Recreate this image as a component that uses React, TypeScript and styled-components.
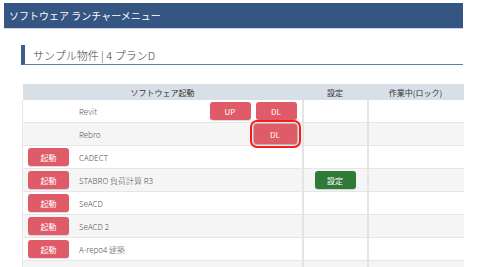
import styled, { createGlobalStyle } from "styled-components";

const GlobalStyle = createGlobalStyle`
  body {
    margin: 0;
    background: #ffffff;
    font-family: "Noto Sans CJK JP", "Noto Sans", sans-serif;
  }
`;

const Page = styled.div`
  width: 486px;
  padding-top: 3px;
`;

const TopBar = styled.div`
  margin: 0 23px 0 4px;
  height: 25px;
  background: #355582;
  border-bottom: 1px solid #c9d6e8;
  color: #ffffff;
  font-size: 10px;
  display: flex;
  align-items: center;
  padding-left: 5px;
`;

const Content = styled.div`
  padding: 16px 23px 0 21px;
`;

const Heading = styled.div`
  height: 19px;
  border-left: 4px solid #3c5d8f;
  border-bottom: 1px solid #5b7fb0;
  padding-left: 8px;
  font-size: 11px;
  font-weight: 300;
  color: #444444;
  display: flex;
  align-items: center;
`;

const Table = styled.table`
  margin-top: 19px;
  margin-left: 1px;
  width: 441px;
  border-collapse: collapse;
  table-layout: fixed;
  font-size: 8px;
  font-weight: 300;
  color: #555555;
`;

const HeadCell = styled.th`
  height: 16px;
  padding: 0;
  background: #d9dfe7;
  font-weight: 400;
  color: #333333;
  text-align: center;
`;

const Row = styled.tr<{ $alt?: boolean }>`
  background: ${(p) => (p.$alt ? "#f5f5f5" : "#ffffff")};
  border-bottom: 1px solid #e6e6e6;
`;

const Cell = styled.td`
  height: 22px;
  padding: 0;
  border-left: 2px solid #e4e4e4;
  &:first-child {
    border-left: 1px solid #e8e8e8;
  }
`;

const LaunchCell = styled.div`
  display: flex;
  align-items: center;
  padding: 0 5px 0 5px;
`;

const StartSlot = styled.div`
  width: 41px;
  margin-right: 10px;
  display: flex;
`;

const Name = styled.span`
  flex: 1;
`;

const Actions = styled.div`
  display: flex;
  gap: 5px;
`;

const Btn = styled.button<{ $green?: boolean; $marked?: boolean }>`
  width: ${(p) => (p.$marked ? "43px" : "41px")};
  height: ${(p) => (p.$marked ? "20px" : "18px")};
  border: none;
  border-radius: 3px;
  background: ${(p) => (p.$green ? "#2e7a36" : "#e05b68")};
  color: #ffffff;
  font-family: inherit;
  font-size: 8px;
  font-weight: 400;
  padding: 0;
  box-shadow: ${(p) =>
    p.$marked
      ? "0 0 0 1px #b5b5b5, 0 0 0 2px #e6e6e6, 0 0 0 4px #ff1a1a"
      : "0 1px 1px rgba(0,0,0,0.15)"};
`;

const CenterCell = styled.div`
  display: flex;
  justify-content: center;
`;

type Item = {
  name: string;
  start?: boolean;
  up?: boolean;
  dl?: boolean;
  marked?: boolean;
  setting?: boolean;
};

const items: Item[] = [
  { name: "Revit", up: true, dl: true },
  { name: "Rebro", dl: true, marked: true },
  { name: "CADECT", start: true },
  { name: "STABRO 負荷計算 R3", start: true, setting: true },
  { name: "SeACD", start: true },
  { name: "SeACD 2", start: true },
  { name: "A-repo4 建築", start: true },
  { name: "" },
];

export default function App() {
  return (
    <Page>
      <GlobalStyle />
      <TopBar>ソフトウェア ランチャーメニュー</TopBar>
      <Content>
        <Heading>サンプル物件 | 4 プランD</Heading>
        <Table>
          <colgroup>
            <col style={{ width: 280 }} />
            <col style={{ width: 65 }} />
            <col style={{ width: 96 }} />
          </colgroup>
          <thead>
            <tr>
              <HeadCell>ソフトウェア起動</HeadCell>
              <HeadCell>設定</HeadCell>
              <HeadCell>作業中(ロック)</HeadCell>
            </tr>
          </thead>
          <tbody>
            {items.map((it, i) => (
              <Row key={i} $alt={i % 2 === 1}>
                <Cell>
                  <LaunchCell>
                    <StartSlot>{it.start && <Btn>起動</Btn>}</StartSlot>
                    <Name>{it.name}</Name>
                    <Actions>
                      {it.up && <Btn>UP</Btn>}
                      {it.dl && <Btn $marked={it.marked}>DL</Btn>}
                    </Actions>
                  </LaunchCell>
                </Cell>
                <Cell>
                  <CenterCell>{it.setting && <Btn $green>設定</Btn>}</CenterCell>
                </Cell>
                <Cell />
              </Row>
            ))}
          </tbody>
        </Table>
      </Content>
    </Page>
  );
}
